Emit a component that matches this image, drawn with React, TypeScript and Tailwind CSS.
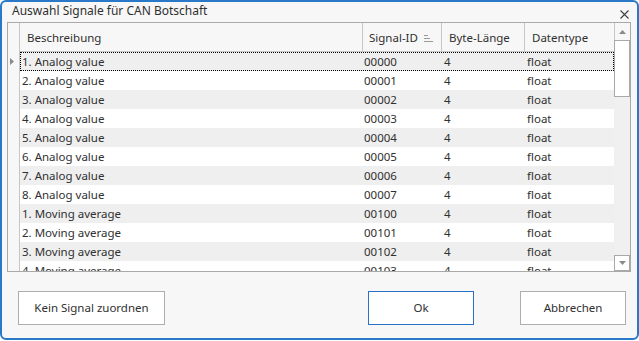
import React from "react";

const rows: [string, string][] = [
  ["1. Analog value", "00000"],
  ["2. Analog value", "00001"],
  ["3. Analog value", "00002"],
  ["4. Analog value", "00003"],
  ["5. Analog value", "00004"],
  ["6. Analog value", "00005"],
  ["7. Analog value", "00006"],
  ["8. Analog value", "00007"],
  ["1. Moving average", "00100"],
  ["2. Moving average", "00101"],
  ["3. Moving average", "00102"],
  ["4. Moving average", "00103"],
];

export default function App() {
  return (
    <div
      className="w-[639px] h-[341px] bg-white text-[11.5px] text-[#303030]"
      style={{ fontFamily: '"Noto Sans", "Open Sans", sans-serif' }}
    >
      <div className="w-[639px] h-[340px] border-2 border-[#2a78c8] rounded-[6px] bg-[#f7f7f7] flex flex-col overflow-hidden">
        {/* title bar */}
        <div className="h-[20px] flex items-center justify-between pl-[10px] pr-[8px]">
          <span className="leading-none -mt-[2px] text-[12px]">Auswahl Signale für CAN Botschaft</span>
          <svg width="9" height="9" viewBox="0 0 9 9" className="mt-[4px]">
            <path d="M0.5 0.5 L8.5 8.5 M8.5 0.5 L0.5 8.5" stroke="#404040" strokeWidth="1.1" />
          </svg>
        </div>
        {/* grid */}
        <div className="ml-[5px] w-[624px] h-[250px] border border-[#a9a9a9] bg-white flex overflow-hidden">
          {/* row header column */}
          <div className="w-[12px] shrink-0 border-r border-[#c6c6c6] bg-[#f7f7f7] flex flex-col">
            <div className="h-[28px]" />
            <div className="h-[19px] mt-[1px] flex items-center pl-[2px]">
              <svg width="5" height="7" viewBox="0 0 5 7">
                <path d="M0 0 L4 3.5 L0 7 Z" fill="#8a8a8a" />
              </svg>
            </div>
          </div>
          {/* data */}
          <div className="w-[594px] shrink-0 flex flex-col">
            <div className="h-[29px] shrink-0 flex border-b border-[#c6c6c6] bg-[#f7f7f7]">
              <div className="w-[343px] border-r border-[#c6c6c6] pl-[7px] flex items-center pt-[2px]">Beschreibung</div>
              <div className="w-[79px] border-r border-[#c6c6c6] pl-[6px] flex items-center pt-[2px] gap-[6px]">
                <span>Signal-ID</span>
                <svg width="9" height="8" viewBox="0 0 9 8">
                  <path d="M0 1.5 H4 M0 4.5 H6 M0 7.5 H9" stroke="#9a9a9a" strokeWidth="1" />
                </svg>
              </div>
              <div className="w-[83px] border-r border-[#c6c6c6] pl-[7px] flex items-center pt-[2px]">Byte-Länge</div>
              <div className="w-[89px] pl-[7px] flex items-center pt-[2px]">Datentype</div>
            </div>
            {rows.map(([name, id], i) => (
              <div
                key={i}
                className={`h-[19px] shrink-0 flex items-center ${i % 2 === 0 ? "bg-[#efefef]" : "bg-white"} ${
                  i === 0 ? "outline-1 outline-dotted outline-black -outline-offset-1" : ""
                }`}
              >
                <div className="w-[343px] pl-[2px]">{name}</div>
                <div className="w-[79px] pl-[1px]">{id}</div>
                <div className="w-[83px] pl-[2px]">4</div>
                <div className="w-[89px] pl-[2px]">float</div>
              </div>
            ))}
          </div>
          {/* scrollbar */}
          <div className="w-[16px] shrink-0 bg-[#f0f0f0] flex flex-col">
            <div className="h-[17px] bg-[#f7f7f7] border-l border-[#c6c6c6] flex items-center justify-center">
              <svg width="7" height="4" viewBox="0 0 7 4">
                <path d="M0 4 L3.5 0 L7 4 Z" fill="#8a8a8a" />
              </svg>
            </div>
            <div className="h-[57px] bg-white border border-[#a9a9a9]" />
            <div className="flex-1" />
            <div className="h-[16px] bg-white border border-[#a9a9a9] flex items-center justify-center">
              <svg width="7" height="4" viewBox="0 0 7 4">
                <path d="M0 0 L3.5 4 L7 0 Z" fill="#8a8a8a" />
              </svg>
            </div>
          </div>
        </div>
        {/* buttons */}
        <div className="mt-[19px] flex pl-[16px]">
          <button className="w-[147px] h-[34px] border border-[#adadad] bg-white text-[#303030]">
            Kein Signal zuordnen
          </button>
          <button className="ml-[203px] w-[106px] h-[34px] border border-[#2a72c8] bg-white text-[#303030]">
            Ok
          </button>
          <button className="ml-[46px] w-[106px] h-[34px] border border-[#adadad] bg-white text-[#303030]">
            Abbrechen
          </button>
        </div>
      </div>
    </div>
  );
}
